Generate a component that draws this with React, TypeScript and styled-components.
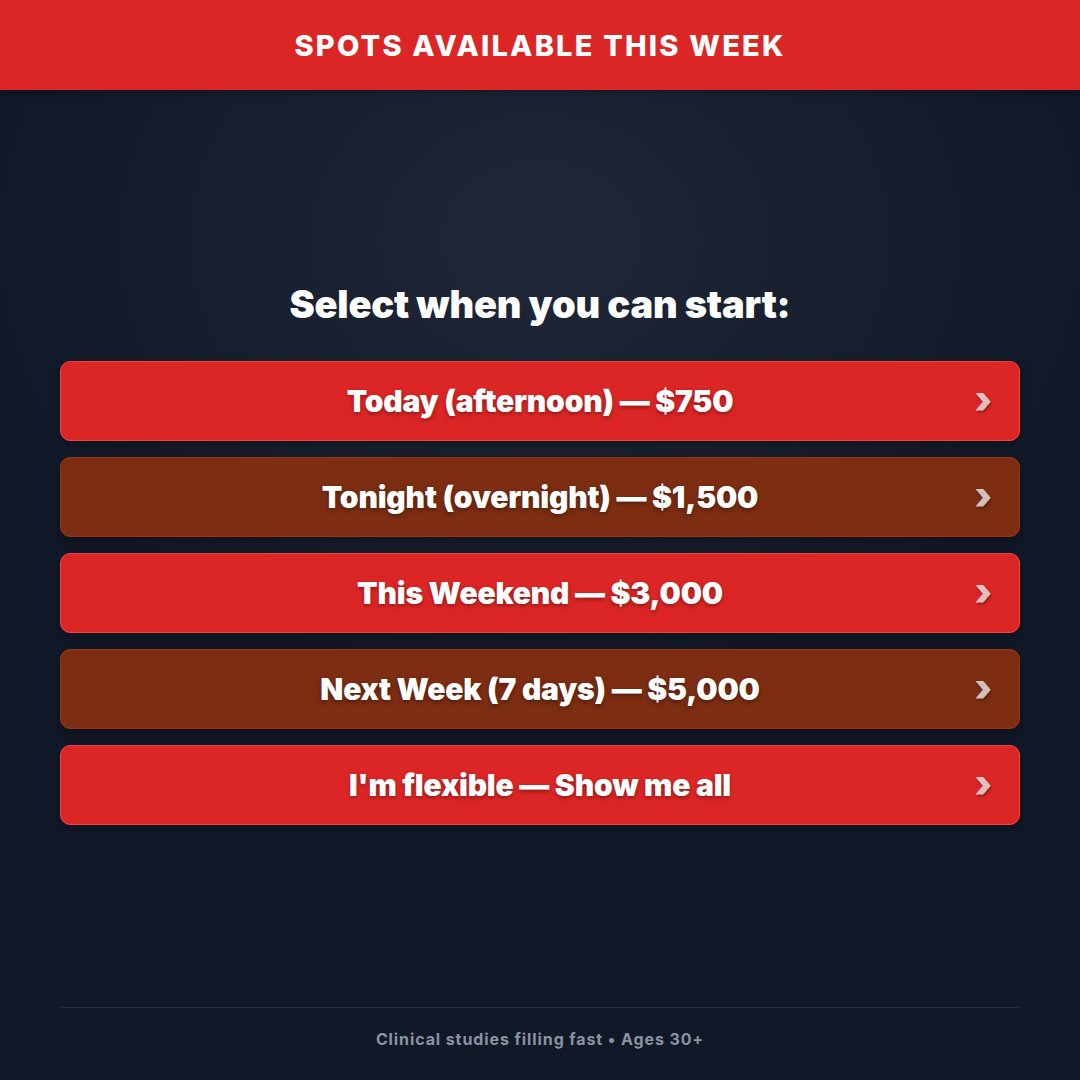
import React from "react";
import styled, { createGlobalStyle } from "styled-components";

const Global = createGlobalStyle`
  html, body { margin: 0; padding: 0; }
  body {
    width: 1080px;
    height: 1080px;
    font-family: Inter, "Noto Sans", sans-serif;
    background: #111827;
    overflow: hidden;
  }
`;

const Page = styled.div`
  width: 1080px;
  height: 1080px;
  display: flex;
  flex-direction: column;
  background:
    radial-gradient(ellipse 560px 440px at 540px 240px, rgba(38, 46, 64, 0.7), rgba(17, 24, 39, 0) 100%),
    #111827;
`;

const Header = styled.header`
  height: 90px;
  flex: none;
  background: #dc2626;
  display: flex;
  align-items: center;
  justify-content: center;
  color: #ffffff;
  font-size: 29px;
  font-weight: 800;
  letter-spacing: 2.2px;
  box-shadow: 0 2px 10px rgba(0, 0, 0, 0.3);
`;

const Main = styled.main`
  flex: 1;
  display: flex;
  flex-direction: column;
  justify-content: center;
  padding: 0 60px;
  padding-top: 9px;
`;

const Title = styled.h1`
  margin: 0 0 34px;
  text-align: center;
  color: #ffffff;
  font-size: 38px;
  font-weight: 900;
  letter-spacing: -0.2px;
`;

const List = styled.div`
  display: flex;
  flex-direction: column;
  gap: 16px;
`;

const Option = styled.button<{ $variant: "red" | "brown" }>`
  position: relative;
  height: 80px;
  width: 100%;
  border-radius: 10px;
  border: 1px solid ${(p) => (p.$variant === "red" ? "#ef4444" : "#9a3412")};
  background: ${(p) => (p.$variant === "red" ? "#dc2626" : "#7c2d12")};
  color: #ffffff;
  font-family: Inter, "Noto Sans", sans-serif;
  font-size: 30px;
  font-weight: 900;
  letter-spacing: -0.2px;
  display: flex;
  align-items: center;
  justify-content: center;
  text-shadow: 0 2px 4px rgba(0, 0, 0, 0.35);
  box-shadow: 0 4px 10px rgba(0, 0, 0, 0.25);
  cursor: pointer;
  padding: 0;
`;

const Chevron = styled.span`
  position: absolute;
  right: 27px;
  top: 50%;
  transform: translateY(-54%);
  font-size: 38px;
  font-weight: 900;
  color: rgba(255, 255, 255, 0.72);
  text-shadow: 1px 2px 3px rgba(0, 0, 0, 0.35);
`;

const Footer = styled.footer`
  flex: none;
  margin: 0 60px;
  border-top: 1px solid #263041;
  height: 73px;
  display: flex;
  align-items: center;
  justify-content: center;
  padding-bottom: 10px;
  box-sizing: border-box;
  color: #8b93a1;
  font-size: 16px;
  font-weight: 700;
  letter-spacing: 0.9px;
`;

const options: { label: string; variant: "red" | "brown" }[] = [
  { label: "Today (afternoon) — $750", variant: "red" },
  { label: "Tonight (overnight) — $1,500", variant: "brown" },
  { label: "This Weekend — $3,000", variant: "red" },
  { label: "Next Week (7 days) — $5,000", variant: "brown" },
  { label: "I'm flexible — Show me all", variant: "red" },
];

export default function App() {
  return (
    <>
      <Global />
      <Page>
        <Header>SPOTS AVAILABLE THIS WEEK</Header>
        <Main>
          <Title>Select when you can start:</Title>
          <List>
            {options.map((o) => (
              <Option key={o.label} $variant={o.variant}>
                {o.label}
                <Chevron>›</Chevron>
              </Option>
            ))}
          </List>
        </Main>
        <Footer>Clinical studies filling fast • Ages 30+</Footer>
      </Page>
    </>
  );
}
